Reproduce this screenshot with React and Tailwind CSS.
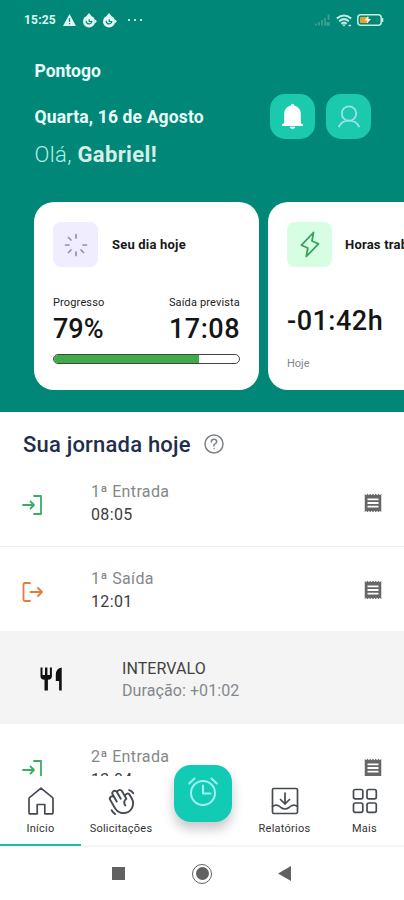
import { MdReceipt } from "react-icons/md";
import { PiHandWaving } from "react-icons/pi";

const StatusBar = () => (
  <div className="flex h-10 items-center justify-between pl-6 pr-5 text-[#dff8f2]">
    <div className="flex items-center">
      <span className="w-8 text-[12px] font-bold leading-4 tracking-[0.2px]">15:25</span>
      <svg className="ml-[7px] h-3 w-[13px]" viewBox="0 0 13 12" fill="currentColor">
        <path fillRule="evenodd" d="M6.500 0L13 12H0ZM5.900 4.200V8h1.200V4.200ZM5.900 9v1.300h1.200V9Z" />
      </svg>
      <Stopwatch className="ml-1.5" />
      <Stopwatch className="ml-[5px]" />
      <span className="ml-[11px] flex gap-[4px]">
        <i className="h-[2px] w-[2px] bg-[#b5e6dc]" />
        <i className="h-[2px] w-[2px] bg-[#b5e6dc]" />
        <i className="h-[2px] w-[2px] bg-[#b5e6dc]" />
      </span>
    </div>
    <div className="flex items-center">
      <svg className="h-3 w-4" viewBox="0 0 16 12" fill="none" stroke="#3f9f90" strokeWidth="1.800">
        <path d="M2 11.500V9.500M5 11.500V8M8 11.500V6M11 11.500V4M14.500 6V0.500M12.500 8.500l3 3M15.500 8.500l-3 3" />
      </svg>
      <svg className="ml-1.5 h-[13px] w-4" viewBox="0 0 16 13" fill="none" stroke="#bcebe0" strokeWidth="2.100">
        <path d="M0.800 4.500Q8 -1.500 15.200 4.500M3.200 7.200Q8 3 12.800 7.200M5.300 9.800Q8 7.300 10.700 9.800" />
        <path d="M6 10.500h4l-2 2z" fill="#bcebe0" stroke="none" />
        <path d="M12.500 11.500h2.500" strokeWidth="1.500" />
      </svg>
      <svg className="ml-[5px] h-3 w-[27px]" viewBox="0 0 27 12" fill="none">
        <rect x="0.800" y="0.800" width="23.400" height="10.400" rx="3" stroke="#c2eee2" strokeWidth="1.500" />
        <rect x="3" y="3" width="8" height="6" rx="1" fill="#e2a62b" />
        <path d="M10.500 2.500L7.500 6.500h2.500v3l4-4.500h-2.500V2.500z" fill="#fff2c8" />
        <path d="M25.500 4v4" stroke="#c2eee2" strokeWidth="1.600" />
      </svg>
    </div>
  </div>
);

const Stopwatch = ({ className }) => (
  <svg className={`h-[15px] w-[15px] ${className}`} viewBox="0 0 15 15" fill="none">
    <path d="M7 0L9.500 3H4.500ZM15 8.300L12.500 6V10.800Z" fill="currentColor" />
    <circle cx="7" cy="8.500" r="6" fill="currentColor" />
    <path d="M4.200 7.800A2.800 2.800 0 1 0 9.800 8.500H7.200V6.300" stroke="#018777" strokeWidth="1.200" />
  </svg>
);

const BellIcon = () => (
  <svg className="h-[27px] w-[23px]" viewBox="0 0 23 27">
    <path
      fill="#fff"
      d="M11.500 0.800c1 0 1.500.7 1.600 1.700 4.200 1 6.700 4.200 6.700 8.300v8.400c0 1 .8 1.600 2.200 2.300v1.400H1v-1.400c1.400-.7 2.200-1.300 2.200-2.300v-8.400c0-4.100 2.500-7.300 6.700-8.300.1-1 .6-1.700 1.600-1.700zM8.700 23.700h5.600c-.3 1.300-1.300 2.100-2.800 2.100s-2.500-.8-2.800-2.100z"
    />
  </svg>
);

const UserIcon = () => (
  <svg className="h-6 w-6" viewBox="0 0 24 24" fill="none" stroke="#9cdff0" strokeWidth="1.800" strokeLinecap="round">
    <circle cx="12" cy="8.500" r="7.200" />
    <path d="M2 21.500C4 17.700 7.500 15.700 12 15.700s8 2 10 5.800" />
  </svg>
);

const SpinnerIcon = () => (
  <svg className="h-6 w-6" viewBox="0 0 24 24" fill="none" stroke="#8f8bc8" strokeWidth="1.700" strokeLinecap="round">
    <path d="M12 1.500V5M12 19v3.500M1.500 12H5M19 12h3.500M4.500 4.500L7 7M17 17l2.500 2.500M4.500 19.500L7 17" />
  </svg>
);

const BoltIcon = () => (
  <svg className="h-[27px] w-5" viewBox="0 0 20 27" fill="none" stroke="#35a35b" strokeWidth="1.800" strokeLinejoin="round">
    <path d="M13.500 1.500L1.500 14.200L7.800 17L6.300 25.500L18.500 12.800L12 10Z" />
  </svg>
);

const EntryIcon = () => (
  <svg className="h-5 w-[21px]" viewBox="0 0 21 20" fill="none" stroke="#39ad60" strokeWidth="1.800" strokeLinecap="round" strokeLinejoin="round">
    <path d="M12 1h7v18h-7" />
    <path d="M1 10h11M8.500 6.500L12 10l-3.500 3.500" />
  </svg>
);

const ExitIcon = () => (
  <svg className="h-5 w-[21px]" viewBox="0 0 21 20" fill="none" stroke="#e37b3e" strokeWidth="1.800" strokeLinecap="round" strokeLinejoin="round">
    <path d="M8 1H3Q1.500 1 1.500 2.500v15Q1.500 19 3 19h5" />
    <path d="M8.500 10H20M16 6l4 4-4 4" />
  </svg>
);

const MealIcon = () => (
  <svg className="h-6 w-[23px]" viewBox="0 0 23 24">
    <path
      fill="#111"
      d="M0.500 0.500h2v7.500h2.500v-7.500h2.400v7.500h2.500v-7.500h2v9c0 2-1.500 3-4 3.300V23.500H4.500V12.800C2 12.500.5 11.500.5 9.500z"
    />
    <path fill="#111" d="M21.700 0.500V23.500h-2.600V14h-3.300V7.500Q16.200 1.200 21.700.5z" />
  </svg>
);

const HomeIcon = () => (
  <svg className="h-7 w-7" viewBox="0 0 28 28" fill="none" stroke="#454a54" strokeWidth="1.700" strokeLinejoin="round">
    <path d="M2 11.700Q2 10.900 2.700 10.300L14 1.200L25.300 10.300q.7.600.7 1.400V26Q26 26.800 25.200 26.800H17.800V17.500H10.200V26.800H2.800Q2 26.800 2 26Z" />
  </svg>
);

const InboxIcon = () => (
  <svg className="h-7 w-7" viewBox="0 0 28 28" fill="none" stroke="#454a54" strokeWidth="1.700" strokeLinejoin="round" strokeLinecap="round">
    <rect x="1.500" y="1.500" width="25" height="25" rx="1.500" />
    <path d="M1.500 19.500C5 17 8 18.500 10 20.500q4 3 8 0C20 18.500 23 17 26.500 19.500" />
    <path d="M14 6v11M9.500 12.500L14 17l4.500-4.500" />
  </svg>
);

const GridIcon = () => (
  <svg className="h-[26px] w-[26px]" viewBox="0 0 26 26" fill="none" stroke="#454a54" strokeWidth="1.700">
    <rect x="1.500" y="1.500" width="9.300" height="9.300" rx="1.800" />
    <rect x="15" y="1.500" width="9.300" height="9.300" rx="1.800" />
    <rect x="1.500" y="15" width="9.300" height="9.300" rx="1.800" />
    <rect x="15" y="15" width="9.300" height="9.300" rx="1.800" />
  </svg>
);

const AlarmIcon = () => (
  <svg className="h-[30px] w-[30px]" viewBox="0 0 30 30" fill="none" stroke="#a2eff1" strokeWidth="2" strokeLinecap="round" strokeLinejoin="round">
    <circle cx="15" cy="16" r="12" />
    <path d="M15 8.500V16.500h7.500M1.200 6.500L6.500 1.500M28.800 6.500L23.500 1.500" />
  </svg>
);

const TimeEntry = ({ icon, label, time }) => (
  <div className="flex h-[87px] shrink-0 border-b border-[#f0f0f0] pl-[22px] pr-5">
    <div className="mt-[35px] w-[69px]">{icon}</div>
    <div className="mt-5 flex-1 text-[16px] leading-[23px] tracking-[0.35px]">
      <p className="text-[#85878b]">{label}</p>
      <p className="text-[#3c3d40]">{time}</p>
    </div>
    <MdReceipt className="mt-8 h-[22px] w-[22px] text-[#666]" />
  </div>
);

const NavItem = ({ icon, label }) => (
  <div className="flex flex-col items-center pt-[11px]">
    <div className="flex h-7 items-center">{icon}</div>
    <span className="mt-[7px] text-[11px] leading-[14px] tracking-[0.25px] text-[#333]">{label}</span>
  </div>
);

const App = () => {
  return (
    <div className="flex h-[900px] w-[404px] flex-col overflow-hidden bg-white font-['Roboto',sans-serif]">
      <header className="h-[412px] shrink-0 overflow-hidden bg-[#018777]">
        <StatusBar />
        <div className="flex justify-between pl-[34.500px] pr-[33px] text-white">
          <div>
            <h1 className="mt-[19px] text-[17.500px] font-bold leading-6 text-[#e9fffb]">Pontogo</h1>
            <p className="mt-[22px] text-[17.500px] font-bold leading-6 tracking-[0.15px] text-[#e9fffb]">Quarta, 16 de Agosto</p>
            <p className="mt-3 text-[22px] leading-7 tracking-[0.35px] text-[#d6eeea]">
              <span className="font-light text-[#b2efe5]">Olá, </span>
              <span className="font-bold">Gabriel!</span>
            </p>
          </div>
          <div className="mt-[54px] flex gap-[11px]">
            <button className="flex h-[45px] w-[45px] items-center justify-center rounded-[15px] bg-[#1bc9ad]">
              <BellIcon />
            </button>
            <button className="flex h-[45px] w-[45px] items-center justify-center rounded-[15px] bg-[#1bc9ad]">
              <UserIcon />
            </button>
          </div>
        </div>
        <div className="mt-[33px] flex gap-[9px] pl-[34px]">
          <div className="h-[188px] w-[225px] shrink-0 rounded-[20px] bg-white px-[19px] pt-5">
            <div className="flex items-center">
              <div className="flex h-[45px] w-[45px] items-center justify-center rounded-lg bg-[#efedff]">
                <SpinnerIcon />
              </div>
              <h2 className="ml-[14px] text-[13px] font-bold leading-5 tracking-[0.2px] text-[#171717]">Seu dia hoje</h2>
            </div>
            <div className="mt-7 flex justify-between text-[11px] leading-4 tracking-[0.15px] text-[#222]">
              <span>Progresso</span>
              <span>Saída prevista</span>
            </div>
            <div className="mt-[2px] flex justify-between text-[27px] font-medium leading-8 text-[#151515]">
              <span>79%</span>
              <span className="tracking-[0.500px]">17:08</span>
            </div>
            <div className="mt-[9px] h-[10px] overflow-hidden rounded-full border border-[#444] bg-white">
              <div className="h-full w-[78.500%] bg-[#42ab49]" />
            </div>
          </div>
          <div className="h-[188px] w-[225px] shrink-0 rounded-[20px] bg-white px-[19px] pt-5">
            <div className="flex items-center">
              <div className="flex h-[45px] w-[45px] items-center justify-center rounded-lg bg-[#d7fee2]">
                <BoltIcon />
              </div>
              <h2 className="ml-[13px] whitespace-nowrap text-[13px] font-bold leading-5 tracking-[0.2px] text-[#171717]">Horas trabalhadas</h2>
            </div>
            <p className="mt-[38px] text-[27px] font-medium leading-8 tracking-[0.500px] text-[#151515]">-01:42h</p>
            <p className="mt-[19px] text-[11px] leading-4 text-[#85878b]">Hoje</p>
          </div>
        </div>
      </header>

      <main className="flex h-[364px] shrink-0 flex-col overflow-hidden">
        <div className="flex h-[47px] shrink-0 items-end pl-[23px]">
          <h2 className="text-[22px] font-medium leading-[29px] tracking-[0.2px] text-[#1f2e4c]">Sua jornada hoje</h2>
          <svg className="mb-[5px] ml-[13px] h-5 w-5" viewBox="0 0 20 20" fill="none" stroke="#7d828c" strokeWidth="1.500" strokeLinecap="round">
            <circle cx="10" cy="10" r="9" />
            <path d="M7.300 8Q7.400 5.300 10 5.300T12.700 7.800Q12.700 9.300 10 10.700V12M10 14.500v.1" />
          </svg>
        </div>
        <div className="mt-px">
          <TimeEntry icon={<EntryIcon />} label="1ª Entrada" time="08:05" />
          <TimeEntry icon={<ExitIcon />} label="1ª Saída" time="12:01" />
        </div>
        <div className="-mt-[3px] flex h-[93px] shrink-0 bg-[#f4f4f4] pl-10">
          <div className="mt-9 w-[82px]">
            <MealIcon />
          </div>
          <div className="mt-[27px] text-[16px] leading-[22px] tracking-[0.08px]">
            <p className="text-[#424242]">INTERVALO</p>
            <p className="text-[#85878b]">Duração: +01:02</p>
          </div>
        </div>
        <div className="pt-px">
          <TimeEntry icon={<EntryIcon />} label="2ª Entrada" time="13:04" />
        </div>
      </main>

      <nav className="relative grid h-[71px] shrink-0 grid-cols-[81px_80px_83px_81px_79px] border-b-2 border-[#f5f5f5] bg-white">
        <NavItem icon={<HomeIcon />} label="Início" />
        <NavItem icon={<PiHandWaving className="h-[31px] w-[31px] text-[#454a54]" />} label="Solicitações" />
        <span />
        <NavItem icon={<InboxIcon />} label="Relatórios" />
        <NavItem icon={<GridIcon />} label="Mais" />
        <button className="absolute -top-[11px] left-[174px] flex h-[57px] w-[58px] items-center justify-center rounded-[17px] bg-[#12cbb4] pb-[3px] shadow-[0_7px_12px_rgba(0,0,0,0.22)]">
          <AlarmIcon />
        </button>
        <span className="absolute -bottom-[1px] left-0 h-[2px] w-[81px] bg-[#20baa5]" />
      </nav>

      <footer className="flex flex-1 items-center pl-[112px] text-[#616161]">
        <span className="h-[13px] w-[13px] bg-current" />
        <span className="ml-[67px] flex h-5 w-5 items-center justify-center rounded-full border-[1.500px] border-current">
          <span className="h-[13px] w-[13px] rounded-full bg-current" />
        </span>
        <svg className="ml-[66px] h-[15px] w-[13px]" viewBox="0 0 13 15" fill="currentColor">
          <path d="M13 0V15L0 7.500Z" />
        </svg>
      </footer>
    </div>
  );
};

export default App;
